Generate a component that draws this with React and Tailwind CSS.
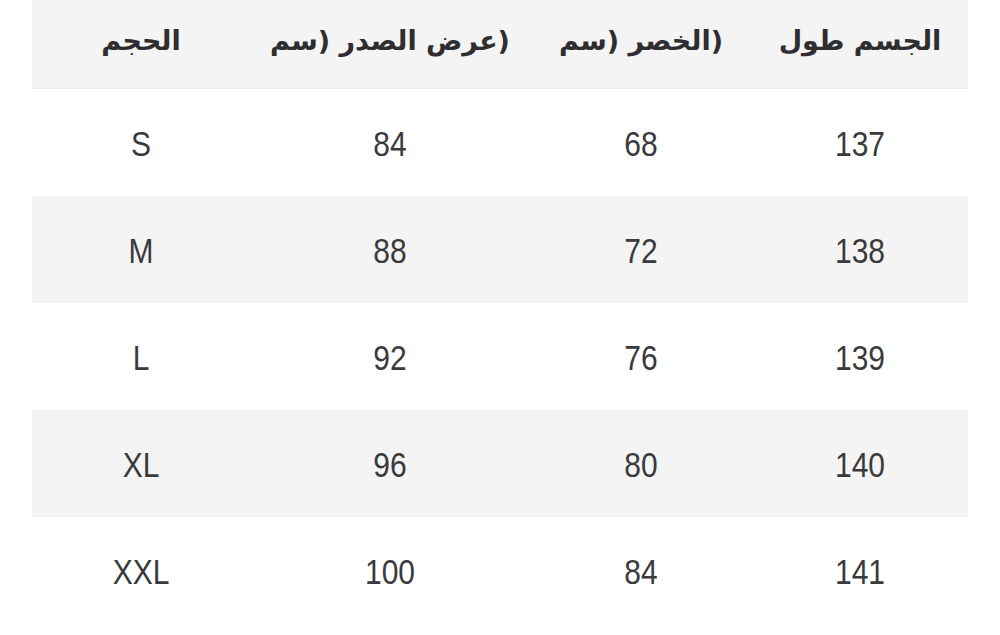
const headers = [
  { label: "الحجم" },
  { label: "(عرض الصدر (سم" },
  { label: "(الخصر (سم" },
  { label: "الجسم طول" },
];

const rows = [
  ["S", "84", "68", "137"],
  ["M", "88", "72", "138"],
  ["L", "92", "76", "139"],
  ["XL", "96", "80", "140"],
  ["XXL", "100", "84", "141"],
];

const cols = "grid grid-cols-[218px_280px_222px_216px]";

export default function App() {
  return (
    <div className="w-[1000px] h-[635px] bg-white overflow-hidden px-[32px]">
      <div className={`${cols} h-[89px] bg-[#f4f4f5] border-b border-[#ececee]`}>
        {headers.map((h, i) => (
          <div key={i} className="flex items-start justify-center pt-[21px]">
            <span
              dir="rtl"
              className="text-[27px] font-bold text-[#2e2e31] font-['DejaVu_Sans',sans-serif]"
            >
              {h.label}
            </span>
          </div>
        ))}
      </div>
      {rows.map((r, i) => (
        <div
          key={i}
          className={`${cols} h-[107px] ${i % 2 === 1 ? "bg-[#f4f4f5]" : "bg-white"}`}
        >
          {r.map((c, j) => (
            <div key={j} className="flex items-center justify-center pt-[1px]">
              <span className="text-[30px] scale-y-[1.15] text-[#3a3a3d] font-['Liberation_Sans',Arial,sans-serif]">
                {c}
              </span>
            </div>
          ))}
        </div>
      ))}
    </div>
  );
}
